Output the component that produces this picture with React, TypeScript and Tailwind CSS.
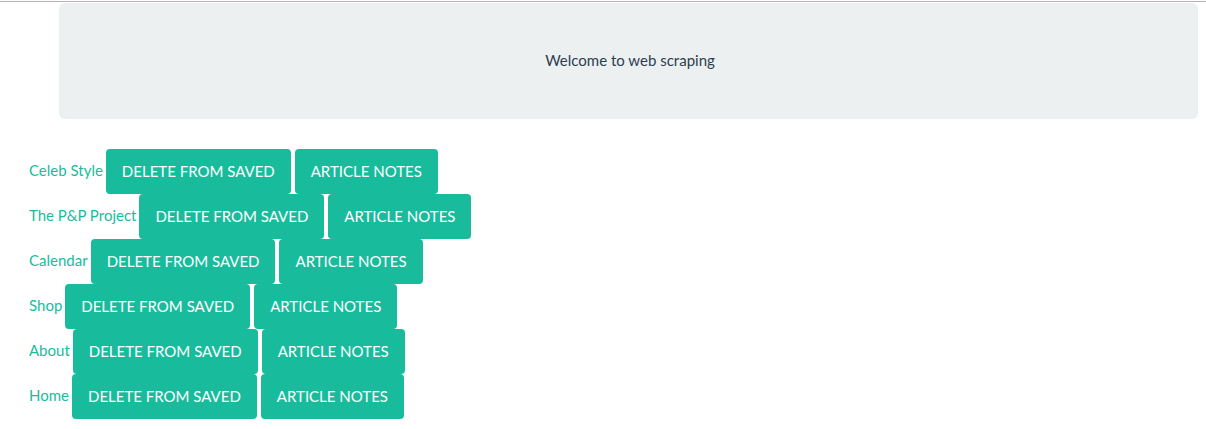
import React from "react";

const links = ["Celeb Style", "The P&P Project", "Calendar", "Shop", "About", "Home"];

export default function App() {
  return (
    <div className="min-h-screen bg-white font-['Lato','Liberation_Sans',sans-serif] text-[15px]">
      <div className="h-px mt-px bg-[#b4b4b4]" />
      <div className="ml-[59px] mt-px w-[1139px] h-[116px] pb-[2px] pl-[3px] rounded-md bg-[#ecf0f1] flex items-center justify-center">
        <span className="text-[#2c3e50] leading-[21px]">Welcome to web scraping</span>
      </div>
      <div className="pl-[29px] pt-[30px]">
        {links.map((name) => (
          <div key={name} className="flex items-baseline h-[45px]">
            <a href="#" className="relative -top-[1px] text-[#18bc9c] leading-[21px] mr-[3px]">{name}</a>
            <button className="bg-[#18bc9c] text-white uppercase leading-[21px] px-[16px] py-[12px] rounded-[4px]">
              Delete From Saved
            </button>
            <button className="ml-[4px] bg-[#18bc9c] text-white uppercase leading-[21px] px-[16px] py-[12px] rounded-[4px]">
              Article Notes
            </button>
          </div>
        ))}
      </div>
    </div>
  );
}
